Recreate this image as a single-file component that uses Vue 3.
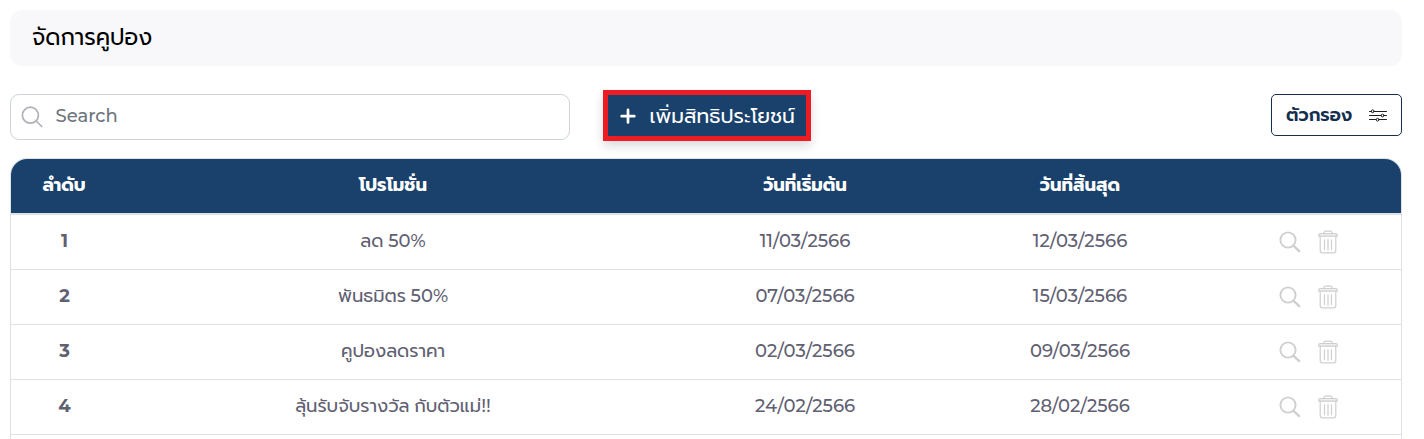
<script setup>
const rows = [
  { id: 1, name: ['ลด ', '50%'], start: '11/03/2566', end: '12/03/2566' },
  { id: 2, name: ['พันธมิตร ', '50%'], start: '07/03/2566', end: '15/03/2566' },
  { id: 3, name: ['คูปองลดราคา', ''], start: '02/03/2566', end: '09/03/2566' },
  { id: 4, name: ['ลุ้นรับจับรางวัล กับตัวแม่', '!!'], start: '24/02/2566', end: '28/02/2566' },
]
</script>

<template>
  <main class="page">
    <header class="title-bar"><h1>จัดการคูปอง</h1></header>

    <section class="toolbar">
      <label class="search">
        <svg class="search-icon" width="22" height="22" viewBox="0 0 22 22">
          <circle cx="9.4" cy="9.2" r="8" />
          <path d="M15.2 15l5.5 5.5" />
        </svg>
        <span class="placeholder">Search</span>
      </label>
      <button class="add" type="button">
        <svg width="16" height="16" viewBox="0 0 16 16"><path d="M8 1.9v12.6M1.7 8.2h12.6" /></svg>
        <span class="add-label">เพิ่มสิทธิประโยชน์</span>
      </button>
      <button class="filter" type="button">
        <span class="filter-label">ตัวกรอง</span>
        <svg width="18" height="14" viewBox="0 0 18 14">
          <path d="M.5 3.5h2M5 3.5h12.5M.5 7.5h11.7M15 7.5h2.5M.5 11.5h6.7M10 11.5h7.5" />
          <circle cx="3.7" cy="3.3" r="1.4" />
          <circle cx="13.6" cy="7.5" r="1.4" />
          <circle cx="8.6" cy="11.7" r="1.4" />
        </svg>
      </button>
    </section>

    <section class="table">
      <div class="row head">
        <div class="cell">ลำดับ</div>
        <div class="cell">โปรโมชั่น</div>
        <div class="cell">วันที่เริ่มต้น</div>
        <div class="cell">วันที่สิ้นสุด</div>
        <div class="cell"></div>
      </div>
      <div v-for="row in rows" :key="row.id" class="row">
        <div class="cell id">{{ row.id }}</div>
        <div class="cell name"><span>{{ row.name[0] }}<b>{{ row.name[1] }}</b></span></div>
        <div class="cell">{{ row.start }}</div>
        <div class="cell">{{ row.end }}</div>
        <div class="cell actions">
          <svg width="22" height="22" viewBox="0 0 22 22">
            <circle cx="9" cy="9" r="7.6" stroke-width="1.9" />
            <path d="M14.6 14.8l5.6 5.4" stroke-width="2.3" />
          </svg>
          <svg width="20" height="24" viewBox="0 0 20 24">
            <path class="lid" d="M2.2 3.5h15.6q1.4 0 1.4 1.2v1.5H.8V4.7q0-1.2 1.4-1.2z" />
            <path d="M5.6 3.2l.7-1.5q.2-.5.8-.5h5.8q.6 0 .8.5l.7 1.5M2.2 6.4v14q0 2.4 2.3 2.4h11q2.3 0 2.3-2.4v-14" />
            <path class="slots" d="M6.5 9.8v9.8M10 9.6v10.7M13.5 9.8v9.8" />
          </svg>
        </div>
      </div>
      <div class="row"></div>
    </section>
  </main>
</template>

<style>
html, body { background: #fff; overflow: hidden; }
</style>

<style scoped>
* { box-sizing: border-box; }
.page {
  height: 439px;
  padding: 10px 22px 0 10px;
  overflow: hidden;
  font-family: Montserrat, Prompt, "Noto Sans Thai", "Open Sans", "DejaVu Sans", sans-serif;
}
svg { flex: none; fill: none; stroke-linecap: round; }
span { white-space: nowrap; }
.title-bar {
  display: flex;
  align-items: center;
  height: 56px;
  padding: 0 22px 2px;
  border-radius: 12px;
  background: #f8f8fb;
}
h1 { margin: 0; font-size: 22.5px; font-weight: 400; color: #000; }
.toolbar { display: flex; align-items: flex-start; height: 92px; padding-top: 24px; }
.search {
  display: flex;
  align-items: center;
  width: 560px;
  height: 46px;
  margin-top: 4px;
  padding-left: 10px;
  border: 1px solid #ced4da;
  border-radius: 9px;
}
.search-icon { stroke: #b2afb9; stroke-width: 1.7; }
.placeholder { margin: -2px 0 0 12.5px; font-size: 18px; font-weight: 500; color: #6c757d; }
button { font-family: inherit; }
.add {
  display: flex;
  align-items: center;
  width: 208px;
  height: 51px;
  margin-left: 33px;
  padding: 0 0 0 12px;
  border: 5px solid #ed1c24;
  background: #19416c;
  color: #fff;
  font-size: 20.25px;
  font-weight: 400;
  box-shadow: 0 5px 10px rgba(0, 0, 0, .15);
}
.add svg { stroke: #fff; stroke-width: 2.7; }
.add-label { margin: 1px 0 0 13.5px; }
.filter {
  display: flex;
  align-items: center;
  justify-content: space-between;
  width: 131px;
  height: 42px;
  margin: 4px 0 0 auto;
  padding: 0 14px;
  border: 1px solid #152e4f;
  border-radius: 5px;
  background: #fff;
  color: #152e4f;
  font-size: 18px;
  font-weight: 600;
}
.filter svg { stroke: #202020; stroke-width: 1; }
.table {
  border: 1px solid #dee2e6;
  border-bottom: 0;
  border-radius: 17px 17px 0 0;
  overflow: hidden;
}
.row {
  display: grid;
  grid-template-columns: 106px 552px 272px 278px 1fr;
  height: 55px;
  border-bottom: 1px solid #dee2e6;
}
.head { height: 56px; border-bottom-width: 2px; background: #19416c; }
.cell {
  display: flex;
  align-items: center;
  justify-content: center;
  padding-bottom: 3px;
  font-size: 18px;
  font-weight: 500;
  color: #5f6072;
}
.head .cell { color: #fff; font-weight: 700; }
.cell.id { padding-left: 1px; font-weight: 700; }
.cell.name { font-weight: 400; }
.name b { font-weight: 500; }
.cell.actions { gap: 17px; padding: 0 4px 0 0; }
.actions svg { stroke: #cfcfcf; stroke-width: 1.2; }
.actions svg .lid { fill: #eee; }
</style>
